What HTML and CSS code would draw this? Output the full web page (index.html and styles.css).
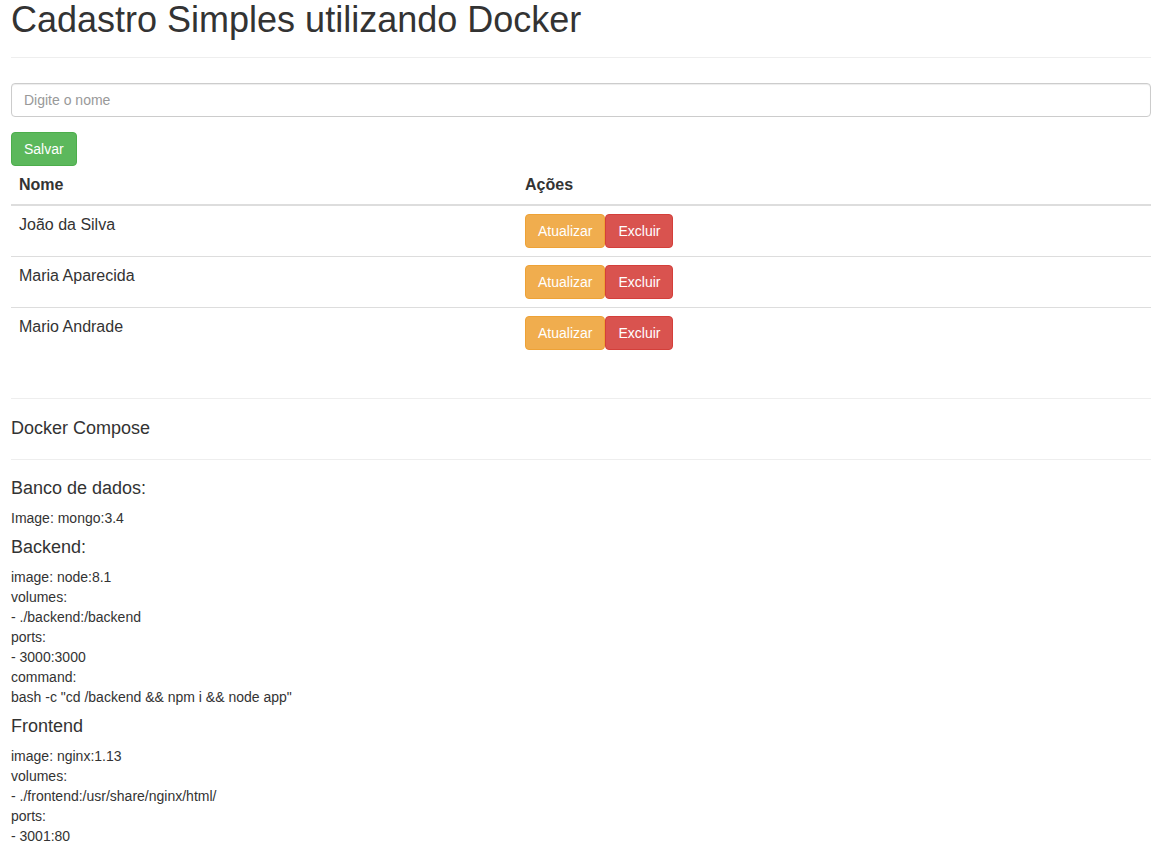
FILE: index.html
```html
<!DOCTYPE html>
<html lang="pt-BR">
<head>
<meta charset="utf-8">
<title>Cadastro Simples utilizando Docker</title>
<link rel="stylesheet" href="styles.css">
</head>
<body>
<div class="container">
  <div class="page-header">
    <h1 class="title">Cadastro Simples utilizando Docker</h1>
  </div>
  <form class="form" onsubmit="return false">
    <div class="form-group">
      <input class="form-control" type="text" placeholder="Digite o nome">
    </div>
    <button class="btn btn-success" type="button">Salvar</button>
  </form>
  <table class="table">
    <thead>
      <tr><th class="col-name">Nome</th><th>Ações</th></tr>
    </thead>
    <tbody>
      <tr>
        <td>João da Silva</td>
        <td><div class="actions"><button class="btn btn-warning" type="button">Atualizar</button><button class="btn btn-danger" type="button">Excluir</button></div></td>
      </tr>
      <tr>
        <td>Maria Aparecida</td>
        <td><div class="actions"><button class="btn btn-warning" type="button">Atualizar</button><button class="btn btn-danger" type="button">Excluir</button></div></td>
      </tr>
      <tr>
        <td>Mario Andrade</td>
        <td><div class="actions"><button class="btn btn-warning" type="button">Atualizar</button><button class="btn btn-danger" type="button">Excluir</button></div></td>
      </tr>
    </tbody>
  </table>
  <hr class="divider">
  <h4 class="subtitle">Docker Compose</h4>
  <hr class="divider divider-tight">
  <h4 class="subtitle">Banco de dados:</h4>
  <p class="text">Image: mongo:3.4</p>
  <h4 class="subtitle">Backend:</h4>
  <p class="text">image: node:8.1<br>volumes:<br>- ./backend:/backend<br>ports:<br>- 3000:3000<br>command:<br>bash -c "cd /backend &amp;&amp; npm i &amp;&amp; node app"</p>
  <h4 class="subtitle">Frontend</h4>
  <p class="text">image: nginx:1.13<br>volumes:<br>- ./frontend:/usr/share/nginx/html/<br>ports:<br>- 3001:80</p>
</div>
</body>
</html>
```
FILE: styles.css
```css
* { box-sizing: border-box; }
html, body { margin: 0; padding: 0; background: #fff; }
body {
  font-family: "Liberation Sans", Arial, Helvetica, sans-serif;
  font-size: 14px;
  line-height: 1.42857143;
  color: #333;
}
.container {
  width: 1140px;
  margin-left: 11px;
}
.page-header {
  padding-bottom: 9px;
  border-bottom: 1px solid #eee;
  margin-bottom: 25px;
}
.title {
  margin: 0 0 8px;
  font-size: 36px;
  font-weight: 500;
  line-height: 1.1;
}
.form { margin: 0; }
.form-group { margin-bottom: 15px; }
.form-control {
  display: block;
  width: 100%;
  height: 34px;
  padding: 6px 12px;
  font-family: inherit;
  font-size: 14px;
  line-height: 1.42857143;
  color: #555;
  background: #fff;
  border: 1px solid #ccc;
  border-radius: 4px;
  box-shadow: inset 0 1px 1px rgba(0,0,0,.075);
  outline: none;
}
.form-control::placeholder { color: #999; }
.btn {
  display: inline-block;
  padding: 6px 12px;
  margin: 0;
  font-family: inherit;
  font-size: 14px;
  font-weight: 400;
  line-height: 1.42857143;
  color: #fff;
  border: 1px solid transparent;
  border-radius: 4px;
  cursor: pointer;
  vertical-align: middle;
}
.btn-success { background: #5cb85c; border-color: #4cae4c; }
.btn-warning { background: #f0ad4e; border-color: #eea236; }
.btn-danger { background: #d9534f; border-color: #d43f3a; }
.table {
  width: 100%;
  border-collapse: collapse;
  border-spacing: 0;
  font-size: 16px;
  margin-bottom: 40px;
}
.table th, .table td {
  padding: 8px;
  line-height: 1.42857143;
  text-align: left;
  vertical-align: top;
}
.table th {
  font-weight: 700;
  vertical-align: bottom;
  border-bottom: 2px solid #ddd;
}
.table td { border-top: 1px solid #ddd; }
.table tbody tr:first-child td { border-top: 0; }
.col-name { width: 506px; }
.actions { display: flex; }
.divider {
  margin: 20px 0;
  border: 0;
  border-top: 1px solid #eee;
  height: 0;
}
.divider-tight { margin-bottom: 19px; }
.subtitle {
  margin: 10px 0 9px;
  font-size: 18px;
  font-weight: 500;
  line-height: 1.1;
}
.divider-tight + .subtitle { margin-top: 0; }
.text { margin: 0 0 10px; }
```
